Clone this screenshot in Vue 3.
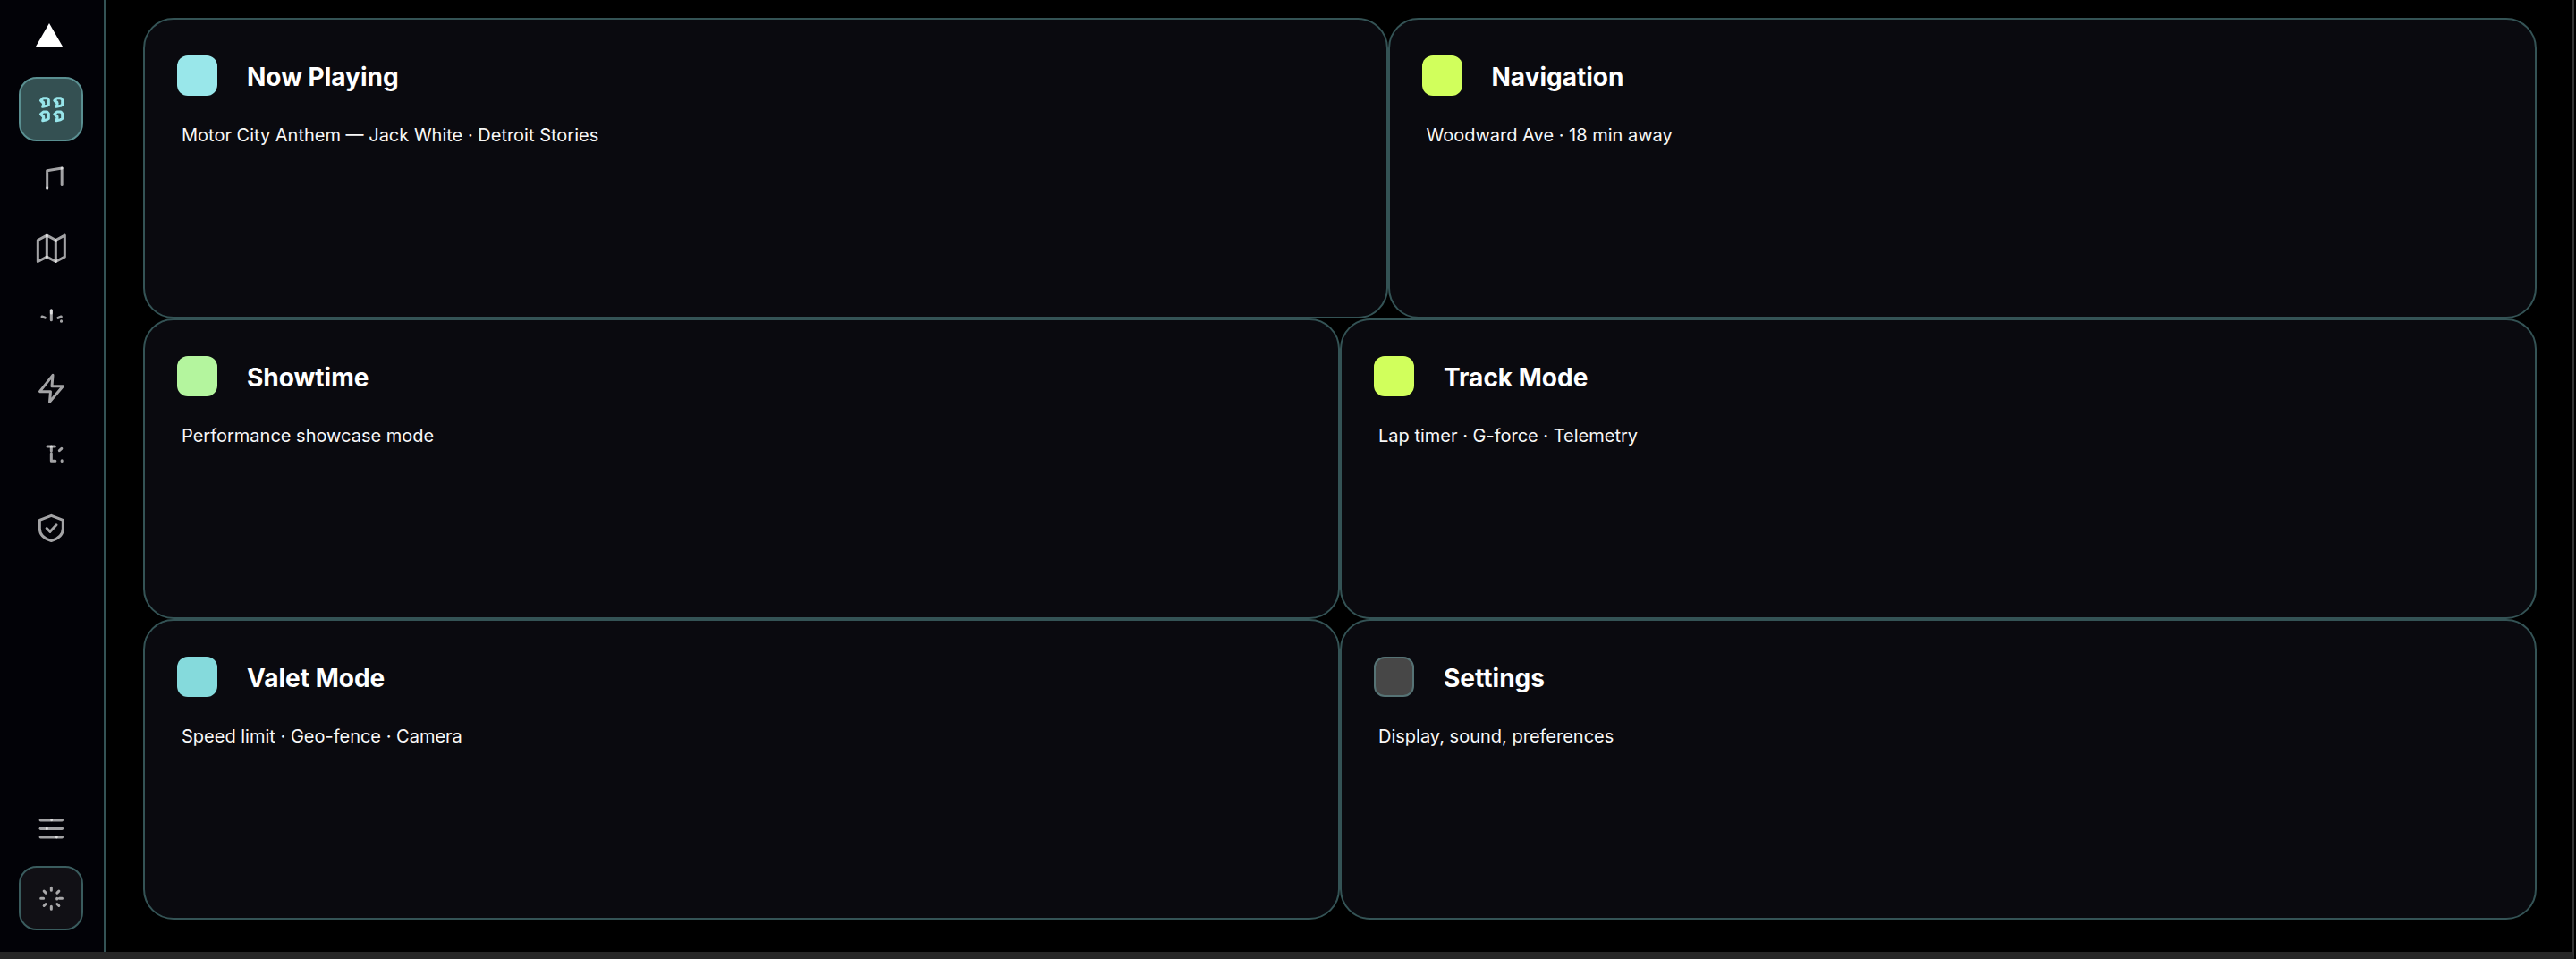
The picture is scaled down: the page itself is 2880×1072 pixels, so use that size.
<template>
  <div class="shell">
    <aside class="sidebar">
      <svg class="logo" viewBox="0 0 34 26" aria-hidden="true">
        <path d="M15 0 30 26H0z" />
      </svg>
      <nav class="nav" aria-label="Main">
        <button
          v-for="item in navItems"
          :key="item.name"
          type="button"
          class="nav-button"
          :class="{ active: item.name === current }"
          :aria-label="item.name"
          @click="current = item.name"
        >
          <svg class="icon" viewBox="0 0 24 24" aria-hidden="true">
            <path v-for="d in item.paths" :key="d" :d="d" />
          </svg>
        </button>
      </nav>
      <div class="nav nav-bottom">
        <button type="button" class="nav-button" aria-label="Controls">
          <svg class="icon heavy" viewBox="0 0 24 24" aria-hidden="true">
            <path d="M5 6.4h14.4" />
            <path d="M5 12.1h14.4" />
            <path d="M5 17.9h14.4" />
            <path class="knob" d="M12.4 6.4v.1" />
            <path class="knob" d="M9.2 12.1v.3" />
            <path class="knob" d="M15.8 17.9v.1" />
          </svg>
        </button>
        <button type="button" class="nav-button framed" aria-label="Brightness">
          <svg class="icon" viewBox="0 0 24 24" aria-hidden="true">
            <path d="M12.2 5v1.8M12.2 17.6v1.8M5.2 12.2H7M17.6 12.2h1.9" />
            <path d="M7.3 7.3l1.2 1.2M16.1 8.5l1.2-1.2M7.3 17.1l1.2-1.2M16.1 15.9l1.2 1.2" />
            <path d="M16 12.2v.4" />
          </svg>
        </button>
      </div>
    </aside>

    <main class="dashboard">
      <div v-for="(row, index) in rows" :key="index" class="row" :class="{ wide: index === 0 }">
        <section v-for="card in row" :key="card.title" class="card">
          <header class="card-header">
            <span class="swatch" :class="card.tone"></span>
            <h2>{{ card.title }}</h2>
          </header>
          <p>{{ card.text }}</p>
        </section>
      </div>
    </main>
  </div>
</template>

<script setup>
import { ref } from "vue";

const current = ref("Home");

// one tile of the home icon, repeated four times
const tile = (x, y) =>
  `M${x} ${y}l1.7-1.6h2.6l1 1.2v3.3l-1.2.7-2.8.6.7-2.2zl1.8 1.2`;

const navItems = [
  {
    name: "Home",
    paths: [tile(5.1, 6.2), tile(14.3, 6.2), tile(5.1, 15.4), tile(14.3, 15.4)],
  },
  { name: "Music", paths: ["M9.4 18V6.4L19.3 4.8", "M19.3 4.8v11.1", "M9.4 17.8v.2"] },
  {
    name: "Map",
    paths: ["M3.2 6.3l6-3.2 6 3.2 6-3.2v14.4l-6 3.2-6-3.2-6 3.2z", "M9.2 3.1v14.4", "M15.2 6.3v14.4"],
  },
  {
    name: "Showtime",
    paths: ["M12.2 6.4v6.6", "M12.2 6.6v1.8", "M6 10.8l2 .7", "M16.7 11.6l2.1-.8", "M18.9 13.6v.3"],
  },
  { name: "Track", paths: ["M13.2 3.2 4.5 14.2h7.2l-.6 7 8.9-10.6h-7.4z"] },
  {
    name: "Timing",
    paths: ["M9.6 4.2h5", "M12.2 4.2v3", "M12.2 8.9v5h2.7", "M17.6 7l1.5-1.4", "M19.3 13.7v.4"],
  },
  {
    name: "Valet",
    paths: [
      "M12.2 3.8 4.4 6.8v5.6c0 4.2 3.2 6.9 7.8 8.3 4.6-1.4 7.8-4.1 7.8-8.3V6.8z",
      "M9.1 12.3l2.3 2.3 4.2-4.5",
    ],
  },
];

const rows = [
  [
    { title: "Now Playing", text: "Motor City Anthem — Jack White · Detroit Stories", tone: "sky" },
    { title: "Navigation", text: "Woodward Ave · 18 min away", tone: "lime" },
  ],
  [
    { title: "Showtime", text: "Performance showcase mode", tone: "green" },
    { title: "Track Mode", text: "Lap timer · G-force · Telemetry", tone: "lime" },
  ],
  [
    { title: "Valet Mode", text: "Speed limit · Geo-fence · Camera", tone: "teal" },
    { title: "Settings", text: "Display, sound, preferences", tone: "grey" },
  ],
];
</script>

<style>
body {
  background: #000;
}
</style>

<style scoped>
.shell {
  display: flex;
  box-sizing: border-box;
  min-height: 100vh;
  margin-right: 2px;
  border-right: 2px solid #333;
  border-bottom: 8px solid #272727;
  background: #000;
  color: #fff;
  font-family: Inter, "Liberation Sans", sans-serif;
}

.sidebar {
  display: flex;
  flex: none;
  flex-direction: column;
  padding: 26px 23px 24px 21px;
  border-right: 2px solid #345355;
  background: #020207;
}

.logo {
  width: 34px;
  height: 26px;
  margin: 0 auto 34px;
  fill: #fff;
}

.nav {
  display: flex;
  flex-direction: column;
  gap: 6px;
}

.nav-bottom {
  margin-top: auto;
}

.nav-button {
  display: flex;
  align-items: center;
  justify-content: center;
  box-sizing: border-box;
  width: 72px;
  height: 72px;
  padding: 0;
  border: 2px solid transparent;
  border-radius: 20px;
  background: none;
  color: rgba(255, 255, 255, 0.64);
  cursor: pointer;
}

.nav-button.active {
  border-color: #5a8f91;
  background: #345052;
  color: #97e5ea;
}

.nav-button.framed {
  border-color: #3a5c5e;
  background: #111015;
}

.icon {
  width: 40px;
  height: 40px;
  fill: none;
  stroke: currentColor;
  stroke-width: 1.8;
  stroke-linecap: round;
  stroke-linejoin: round;
}

.icon.heavy {
  stroke-width: 2.1;
}

.knob {
  stroke-width: 1.7;
}

.dashboard {
  display: grid;
  flex: 1;
  grid-template-rows: repeat(3, 1fr);
  min-width: 0;
  padding: 20px 40px 36px 42px;
}

.row {
  display: grid;
  grid-template-columns: 1fr 1fr;
}

.row.wide {
  grid-template-columns: 13fr 12fr;
}

.card {
  padding: 40px 36px;
  border: 2px solid #345355;
  border-radius: 34px;
  background: #0a0a0f;
}

.card-header {
  display: flex;
  align-items: flex-end;
  gap: 33px;
}

.swatch {
  box-sizing: border-box;
  width: 45px;
  height: 45px;
  border-radius: 12px;
}

.sky {
  background: #99e7ea;
}

.lime {
  background: #d1ff5c;
}

.green {
  background: #b4f59e;
}

.teal {
  background: #85dadc;
}

.grey {
  border: 2px solid #567375;
  background: #474747;
}

h2 {
  margin: 0;
  font-size: 28px;
  font-weight: 700;
  line-height: 42px;
}

p {
  margin: 30px 0 0 5px;
  color: #f8f8f8;
  font-size: 20px;
  line-height: 28px;
}
</style>
